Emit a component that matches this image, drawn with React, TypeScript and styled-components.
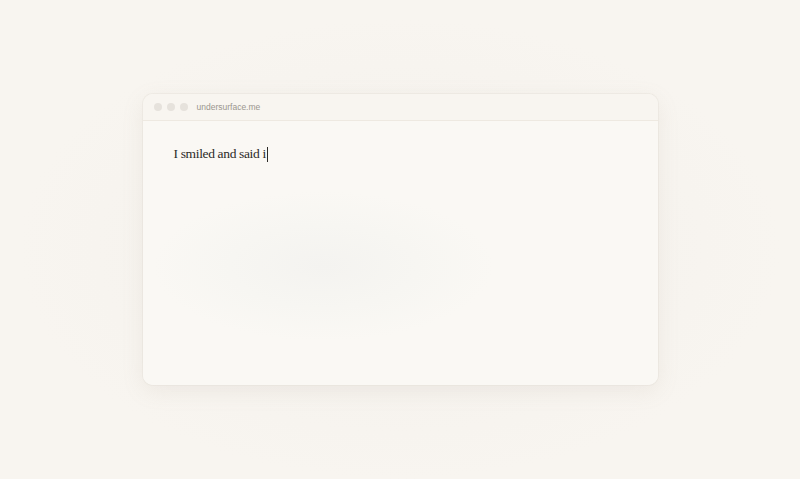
import styled, { createGlobalStyle } from "styled-components";

export default function App() {
    return (
        <>
            <Global />
            <Page>
                <Window>
                    <TitleBar>
                        <Dots>
                            <Dot />
                            <Dot />
                            <Dot />
                        </Dots>
                        <Url>undersurface.me</Url>
                    </TitleBar>
                    <Body>
                        <Line>
                            I smiled and said i<Caret />
                        </Line>
                    </Body>
                </Window>
            </Page>
        </>
    );
}

const Global = createGlobalStyle`
    html, body {
        margin: 0;
        padding: 0;
        background: #f7f5f0;
    }
`;

const Page = styled.div`
    height: 479px;
    display: flex;
    align-items: center;
    justify-content: center;
    background: radial-gradient(ellipse 380px 230px at 50% 52%, #f3f0eb 0%, #f6f3ee 60%, #f8f5f0 100%);
`;

const Window = styled.div`
    width: 515px;
    height: 291px;
    display: flex;
    flex-direction: column;
    border-radius: 10px;
    overflow: hidden;
    background: #faf8f4;
    box-shadow: 0 0 0 1px rgba(228, 223, 215, 0.4), 0 6px 22px rgba(165, 152, 135, 0.12);
`;

const TitleBar = styled.div`
    height: 26px;
    flex-shrink: 0;
    display: flex;
    align-items: center;
    padding-left: 11px;
    background: #f8f5f0;
    border-bottom: 1px solid #eee9e1;
`;

const Dots = styled.div`
    display: flex;
    gap: 5px;
`;

const Dot = styled.span`
    width: 8px;
    height: 8px;
    border-radius: 50%;
    background: #e6e2dc;
`;

const Url = styled.span`
    margin-left: 9px;
    font-family: "Liberation Sans", Arial, sans-serif;
    font-size: 8.5px;
    color: #9b968f;
`;

const Body = styled.div`
    flex: 1;
    padding: 25px 31px;
    background: radial-gradient(ellipse 170px 75px at 35% 55%, #f4f3f0 0%, #f7f6f2 55%, #faf8f4 100%);
`;

const Line = styled.div`
    font-family: "Liberation Serif", "Times New Roman", serif;
    font-size: 13.5px;
    letter-spacing: -0.35px;
    color: #2c2a27;
    display: flex;
    align-items: center;
`;

const Caret = styled.span`
    display: inline-block;
    width: 1.5px;
    height: 15px;
    margin-left: 1px;
    background: #2c2a27;
`;
